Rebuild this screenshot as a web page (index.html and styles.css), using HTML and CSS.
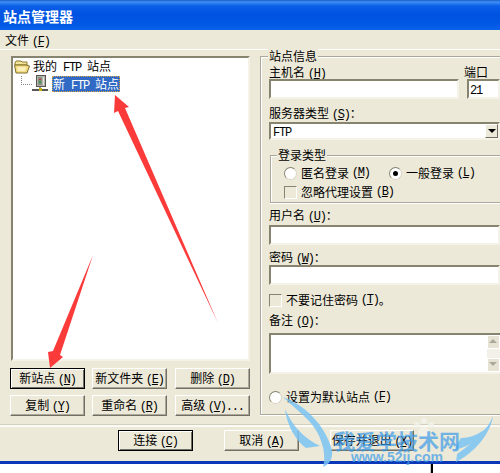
FILE: index.html
```html
<!DOCTYPE html>
<html lang="zh-CN">
<head>
    <meta charset="UTF-8">
    <title>站点管理器</title>
    <link rel="stylesheet" href="styles.css">
</head>
<body>
    <div class="window">
        <div class="titlebar">站点管理器</div>
        <div class="menubar">文件 <span class="lat">(<u>F</u>)</span></div>

        <div class="content">
            <div class="left">
                <div class="tree">
                    <div class="tree-root">
                        <svg class="folder-icon" width="16" height="14" viewBox="0 0 16 14">
                            <path d="M1 3 L2 1 H7 L8 2 H13 V5 H1 Z" fill="#f4e39a" stroke="#8a7a30"/>
                            <path d="M0.5 5 H12 L15.5 6 L13 13 H2 Z" fill="#f3dc80" stroke="#7d6c28"/>
                            <path d="M3 7 H12 L11 11 H4 Z" fill="#fbf0bd"/>
                        </svg>
                        <span>我的<span class="lat"> FTP </span>站点</span>
                    </div>
                    <div class="tree-child">
                        <span class="tree-dots"></span>
                        <svg class="server-icon" width="17" height="17" viewBox="0 0 17 17">
                            <rect x="4.5" y="0.5" width="9" height="11" fill="#b5b5ad" stroke="#55554f"/>
                            <rect x="6" y="2" width="4" height="8" fill="#8c8c86"/>
                            <rect x="7" y="4" width="2" height="1" fill="#d03030"/>
                            <rect x="7" y="6" width="2" height="2" fill="#30a040"/>
                            <rect x="11" y="2" width="1" height="8" fill="#e4e4de"/>
                            <path d="M8 12 V14" stroke="#333"/>
                            <path d="M0 15 H16" stroke="#111" stroke-width="1.4"/>
                            <rect x="7" y="13" width="3" height="3" fill="#c8b010"/>
                        </svg>
                        <span class="tree-selected">新<span class="lat"> FTP </span>站点</span>
                    </div>
                </div>
                <div class="left-buttons">
                    <button class="btn btn-default">新站点 <span class="lat">(<u>N</u>)</span></button>
                    <button class="btn">新文件夹 <span class="lat">(<u>E</u>)</span></button>
                    <button class="btn">删除 <span class="lat">(<u>D</u>)</span></button>
                    <button class="btn">复制 <span class="lat">(<u>Y</u>)</span></button>
                    <button class="btn">重命名 <span class="lat">(<u>R</u>)</span></button>
                    <button class="btn">高级 <span class="lat">(<u>V</u>)...</span></button>
                </div>
            </div>

            <div class="site-info">
                <div class="group-title">站点信息</div>
                <div class="host-row">
                    <div class="host-field">
                        <div class="label">主机名 <span class="lat">(<u>H</u>)</span></div>
                        <div class="input"></div>
                    </div>
                    <div class="port-field">
                        <div class="label port-label">端口</div>
                        <div class="input"><span class="lat">21</span></div>
                    </div>
                </div>
                <div class="label label-type">服务器类型 <span class="lat">(<u>S</u>)</span>：</div>
                <div class="input select">
                    <span class="lat">FTP</span>
                    <span class="select-btn"><i class="arrow-down"></i></span>
                </div>

                <div class="login-group">
                    <div class="group-title login-title">登录类型</div>
                    <div class="radio-row">
                        <span class="opt opt-first"><i class="radio"></i>匿名登录 <span class="lat">(<u>M</u>)</span></span>
                        <span class="opt"><i class="radio radio-on"></i>一般登录 <span class="lat">(<u>L</u>)</span></span>
                    </div>
                    <div class="opt proxy-row"><i class="check"></i>忽略代理设置 <span class="lat">(<u>B</u>)</span></div>
                </div>

                <div class="label label-user">用户名 <span class="lat">(<u>U</u>)</span>：</div>
                <div class="input"></div>
                <div class="label label-pass">密码 <span class="lat">(<u>W</u>)</span>：</div>
                <div class="input"></div>
                <div class="opt remember-row"><i class="check"></i>不要记住密码 <span class="lat">(<u>T</u>)</span>。</div>
                <div class="label label-note">备注 <span class="lat">(<u>O</u>)</span>：</div>
                <div class="input notes">
                    <div class="scrollbar">
                        <span class="scroll-btn"><i class="arrow-up"></i></span>
                        <span class="scroll-btn"><i class="arrow-dn"></i></span>
                    </div>
                </div>
                <div class="opt default-row"><i class="radio"></i>设置为默认站点 <span class="lat">(<u>F</u>)</span></div>
            </div>
        </div>

        <div class="separator"></div>

        <div class="actions">
            <button class="btn btn-default">连接 <span class="lat">(<u>C</u>)</span></button>
            <button class="btn">取消 <span class="lat">(<u>A</u>)</span></button>
            <button class="btn btn-save">保存并退出 <span class="lat">(<u>X</u>)</span></button>
        </div>
        <div class="taskbar"><span class="caret"></span></div>
    </div>

    <!-- annotations on top of the screenshot -->
    <svg class="arrows" width="500" height="473" viewBox="0 0 500 473">
        <path d="M115 95 L129 107 L125 108 L218 323 L118 111 L114 113 Z" fill="#fb3a3a"/>
        <path d="M93 255 L60 355 L63 357 L50 368 L48 352 L53 351 Z" fill="#fb3a3a"/>
        <g fill="#7cc4f4" opacity="0.85">
            <path d="M283 397 C305 405 325 425 332 450 C333 458 330 464 323 467 C327 455 322 432 305 417 C298 410 290 404 283 397 Z"/>
            <path d="M285 409 C292 425 303 438 320 446 L306 448 C295 440 287 425 285 409 Z"/>
            <path d="M493 416 C488 430 472 444 457 454 L456 462 C472 454 490 436 493 416 Z"/>
            <path d="M490 424 C482 434 470 438 461 438 C458 442 456 446 455 450 C470 446 484 438 490 424 Z"/>
        </g>
        <g fill="#f4f3ec" opacity="0.8">
            <circle cx="417" cy="425" r="3"/>
            <circle cx="424" cy="421" r="3"/>
            <circle cx="431" cy="425" r="3"/>
            <ellipse cx="424" cy="432" rx="6" ry="5"/>
        </g>
    </svg>
    <div class="watermark">
        <div class="wm-title">我爱学技术网</div>
        <div class="wm-url">www.52ij.com</div>
    </div>
</body>
</html>
```

FILE: styles.css
```css
* {
    margin: 0;
    padding: 0;
    box-sizing: border-box;
}

html, body {
    width: 500px;
    height: 473px;
    overflow: hidden;
}

body {
    font-family: "Noto Sans CJK SC", "Liberation Mono", sans-serif;
    font-size: 12px;
    line-height: 14px;
    color: #000;
    background: #ece9d8;
    position: relative;
}

/* latin letters in the old dialog font are 6px wide */
.lat {
    font-family: "Liberation Mono", "Noto Sans CJK SC", monospace;
    font-size: 12px;
    letter-spacing: -1.2px;
}

.window {
    width: 500px;
    height: 473px;
    display: flex;
    flex-direction: column;
}

.titlebar {
    height: 30px;
    padding: 7px 0 0 3px;
    color: #fff;
    font-size: 14px;
    font-weight: bold;
    line-height: 18px;
    background: linear-gradient(180deg, #1a5fc8 0, #3f8ff5 2px, #0a5ee8 6px, #0052e0 14px, #0058e4 24px, #0a62ec 30px);
}

.menubar {
    height: 20px;
    padding: 3px 0 0 5px;
    border-bottom: 1px solid #fff;
}

.content {
    display: flex;
    height: 374px;
    padding-top: 6px;
}

/* left side */
.left {
    width: 260px;
    padding-left: 10px;
    flex-shrink: 0;
}

.tree {
    width: 239px;
    height: 305px;
    margin-left: 1px;
    background: #fff;
    border: 2px solid #fff;
    border-top-color: #86836f;
    border-left-color: #86836f;
    border-right-color: #f5f3e8;
    border-bottom-color: #f5f3e8;
    padding: 1px;
}

.tree-root {
    display: flex;
    align-items: center;
    height: 16px;
}

.folder-icon {
    flex-shrink: 0;
    margin-right: 3px;
}

.tree-child {
    display: flex;
    align-items: center;
    height: 17px;
    padding-left: 7px;
}

.tree-dots {
    width: 11px;
    height: 9px;
    margin-bottom: 7px;
    border-left: 1px dotted #888;
    border-bottom: 1px dotted #888;
}

.server-icon {
    flex-shrink: 0;
    margin-right: 3px;
}

.tree-selected {
    background: #316ac5;
    color: #fff;
    height: 16px;
    padding: 0 1px;
    line-height: 15px;
    outline: 1px dotted #d9a441;
    outline-offset: -1px;
}

.left-buttons {
    display: grid;
    grid-template-columns: 82px 83px 75px;
    grid-auto-rows: 21px;
    row-gap: 6px;
    margin-top: 7px;
}

.separator {
    height: 3px;
    flex-shrink: 0;
    background: #d3d0bf;
    border-bottom: 2px solid #fbfaf4;
}

.btn {
    font: inherit;
    color: #000;
    width: 75px;
    height: 21px;
    background: #ece9d8;
    border: 1px solid #fff;
    border-right-color: #716f64;
    border-bottom-color: #716f64;
    box-shadow: inset -1px -1px 0 #aca899;
    line-height: 16px;
    white-space: nowrap;
}

.btn-default {
    border: 1px solid #000;
    box-shadow: inset 1px 1px 0 #fff, inset -1px -1px 0 #716f64;
}

.btn-save {
    width: 84px;
}

/* right side */
.site-info {
    position: relative;
    width: 240px;
    height: 359px;
    padding: 8px 0 0 8px;
    border: 1px solid #aca899;
    border-right: 0;
    box-shadow: inset 1px 1px 0 #fff, 0 1px 0 #fff;
    flex-shrink: 0;
}

.group-title {
    position: absolute;
    top: -8px;
    left: 7px;
    padding: 0 1px;
    background: #ece9d8;
}

.login-title {
    left: 6px;
}

.host-row {
    display: flex;
    gap: 8px;
}

.host-field {
    width: 190px;
}

.port-field {
    width: 33px;
}

.label {
    height: 14px;
}

.port-label {
    margin-left: -3px;
}

.input {
    height: 20px;
    width: 231px;
    background: #fff;
    border: 2px solid #fff;
    border-top-color: #86836f;
    border-left-color: #86836f;
    border-right-color: #f5f3e8;
    border-bottom-color: #f5f3e8;
    line-height: 15px;
    padding-left: 1px;
    position: relative;
}

.host-field .input,
.port-field .input {
    width: 100%;
}

.label-type {
    margin-top: 7px;
    height: 16px;
}

.select {
    height: 18px;
    padding-left: 2px;
    line-height: 14px;
}

.select-btn {
    position: absolute;
    right: 0;
    top: 0;
    width: 13px;
    height: 14px;
    background: #ece9d8;
    border: 1px solid #fff;
    border-right-color: #716f64;
    border-bottom-color: #716f64;
}

.arrow-down {
    position: absolute;
    left: 2px;
    top: 4px;
    border: 4px solid transparent;
    border-top: 4px solid #000;
    border-bottom: 0;
}

.login-group {
    position: relative;
    width: 230px;
    height: 48px;
    margin: 15px 0 0 1px;
    border: 1px solid #aca899;
    border-right: 0;
    box-shadow: inset 1px 1px 0 #fff, 0 1px 0 #fff;
    padding: 10px 0 0 13px;
}

.radio-row {
    display: flex;
    height: 14px;
}

.opt {
    display: flex;
    align-items: center;
    white-space: pre;
}

.opt-first {
    width: 105px;
}

.radio {
    width: 13px;
    height: 13px;
    border-radius: 50%;
    background: #fff;
    border: 1px solid #d8d5c6;
    border-top-color: #86836f;
    border-left-color: #86836f;
    margin-right: 4px;
    position: relative;
    flex-shrink: 0;
}

.radio-on::after {
    content: "";
    position: absolute;
    left: 3px;
    top: 3px;
    width: 5px;
    height: 5px;
    border-radius: 50%;
    background: #000;
}

.check {
    width: 13px;
    height: 13px;
    background: #ece9d8;
    border: 1px solid #fff;
    border-top-color: #86836f;
    border-left-color: #86836f;
    margin-right: 4px;
    flex-shrink: 0;
}

.proxy-row {
    margin-top: 5px;
}

.label-user {
    margin-top: 5px;
    height: 17px;
}

.label-pass {
    margin-top: 5px;
    height: 15px;
}

.remember-row {
    margin-top: 8px;
    height: 14px;
}

.label-note {
    margin-top: 6px;
    height: 20px;
}

.notes {
    height: 41px;
    border-right: 0;
}

.scrollbar {
    position: absolute;
    right: 0;
    top: 0;
    width: 13px;
    height: 37px;
    display: flex;
    flex-direction: column;
    justify-content: space-between;
    background: #f3f1e7;
}

.scroll-btn {
    display: block;
    height: 14px;
    background: #e6e3d4;
    border: 1px solid #fff;
    position: relative;
}

.arrow-up {
    position: absolute;
    left: 1px;
    top: 3px;
    border: 4px solid transparent;
    border-bottom: 4px solid #aca899;
    border-top: 0;
}

.arrow-dn {
    position: absolute;
    left: 1px;
    top: 3px;
    border: 4px solid transparent;
    border-top: 4px solid #aca899;
    border-bottom: 0;
}

.default-row {
    margin-top: 16px;
    height: 14px;
}

/* bottom row */
.actions {
    display: flex;
    gap: 31px;
    height: 24px;
    padding: 3px 0 0 118px;
}

.taskbar {
    position: relative;
    margin-top: 10px;
    height: 12px;
    background: #fff;
    border-top: 3px solid #0a36b8;
}

.caret {
    position: absolute;
    left: 431px;
    top: 0;
    height: 9px;
    width: 2px;
    background: #000;
    box-shadow: -1px 0 0 #ccc;
}

/* overlays */
.arrows {
    position: absolute;
    left: 0;
    top: 0;
    pointer-events: none;
}

.watermark {
    position: absolute;
    left: 333px;
    top: 429px;
    width: 128px;
    text-align: center;
    color: #3d9be8;
    opacity: 0.7;
    font-weight: bold;
}

.wm-title {
    font-size: 21px;
    line-height: 23px;
}

.wm-url {
    font-family: "Liberation Sans", sans-serif;
    font-size: 14px;
    line-height: 11px;
}
```
